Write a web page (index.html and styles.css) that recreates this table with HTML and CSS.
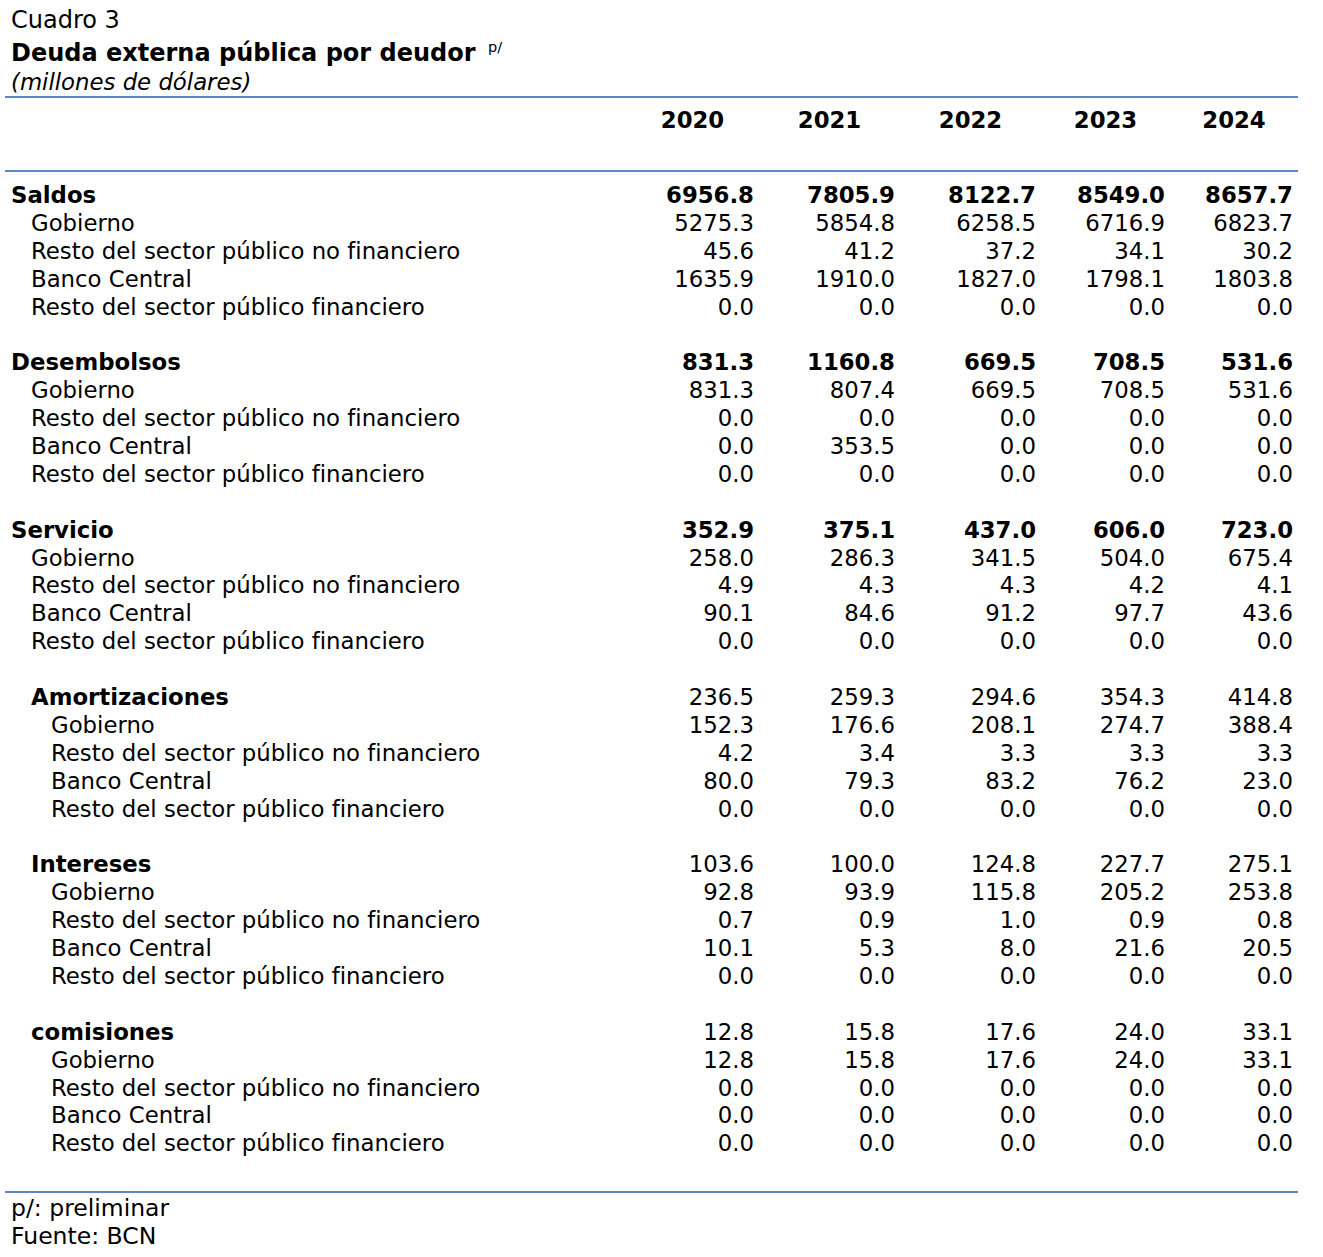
FILE: index.html
```html
<!DOCTYPE html>
<html lang="es">
<head>
<meta charset="utf-8">
<title>Cuadro 3</title>
<link rel="stylesheet" href="styles.css">
</head>
<body>
<div class="sheet">
  <div class="caption">
    <div class="cap-num">Cuadro 3</div>
    <div class="cap-title">Deuda externa pública por deudor <sup class="sup">p/</sup></div>
    <div class="cap-unit">(millones de dólares)</div>
  </div>
  <div class="head">
    <div class="row year-row">
      <div></div>
      <div class="yr">2020</div><div class="yr">2021</div><div class="yr">2022</div><div class="yr">2023</div><div class="yr">2024</div>
    </div>
  </div>
  <div class="body">
    <div class="row strong"><div class="lab">Saldos</div><div class="num">6956.8</div><div class="num">7805.9</div><div class="num">8122.7</div><div class="num">8549.0</div><div class="num">8657.7</div></div>
    <div class="row"><div class="lab l1">Gobierno</div><div class="num">5275.3</div><div class="num">5854.8</div><div class="num">6258.5</div><div class="num">6716.9</div><div class="num">6823.7</div></div>
    <div class="row"><div class="lab l1">Resto del sector público no financiero</div><div class="num">45.6</div><div class="num">41.2</div><div class="num">37.2</div><div class="num">34.1</div><div class="num">30.2</div></div>
    <div class="row"><div class="lab l1">Banco Central</div><div class="num">1635.9</div><div class="num">1910.0</div><div class="num">1827.0</div><div class="num">1798.1</div><div class="num">1803.8</div></div>
    <div class="row"><div class="lab l1">Resto del sector público financiero</div><div class="num">0.0</div><div class="num">0.0</div><div class="num">0.0</div><div class="num">0.0</div><div class="num">0.0</div></div>
    <div class="row blank"></div>
    <div class="row strong"><div class="lab">Desembolsos</div><div class="num">831.3</div><div class="num">1160.8</div><div class="num">669.5</div><div class="num">708.5</div><div class="num">531.6</div></div>
    <div class="row"><div class="lab l1">Gobierno</div><div class="num">831.3</div><div class="num">807.4</div><div class="num">669.5</div><div class="num">708.5</div><div class="num">531.6</div></div>
    <div class="row"><div class="lab l1">Resto del sector público no financiero</div><div class="num">0.0</div><div class="num">0.0</div><div class="num">0.0</div><div class="num">0.0</div><div class="num">0.0</div></div>
    <div class="row"><div class="lab l1">Banco Central</div><div class="num">0.0</div><div class="num">353.5</div><div class="num">0.0</div><div class="num">0.0</div><div class="num">0.0</div></div>
    <div class="row"><div class="lab l1">Resto del sector público financiero</div><div class="num">0.0</div><div class="num">0.0</div><div class="num">0.0</div><div class="num">0.0</div><div class="num">0.0</div></div>
    <div class="row blank"></div>
    <div class="row strong"><div class="lab">Servicio</div><div class="num">352.9</div><div class="num">375.1</div><div class="num">437.0</div><div class="num">606.0</div><div class="num">723.0</div></div>
    <div class="row"><div class="lab l1">Gobierno</div><div class="num">258.0</div><div class="num">286.3</div><div class="num">341.5</div><div class="num">504.0</div><div class="num">675.4</div></div>
    <div class="row"><div class="lab l1">Resto del sector público no financiero</div><div class="num">4.9</div><div class="num">4.3</div><div class="num">4.3</div><div class="num">4.2</div><div class="num">4.1</div></div>
    <div class="row"><div class="lab l1">Banco Central</div><div class="num">90.1</div><div class="num">84.6</div><div class="num">91.2</div><div class="num">97.7</div><div class="num">43.6</div></div>
    <div class="row"><div class="lab l1">Resto del sector público financiero</div><div class="num">0.0</div><div class="num">0.0</div><div class="num">0.0</div><div class="num">0.0</div><div class="num">0.0</div></div>
    <div class="row blank"></div>
    <div class="row"><div class="lab l1 b">Amortizaciones</div><div class="num">236.5</div><div class="num">259.3</div><div class="num">294.6</div><div class="num">354.3</div><div class="num">414.8</div></div>
    <div class="row"><div class="lab l2">Gobierno</div><div class="num">152.3</div><div class="num">176.6</div><div class="num">208.1</div><div class="num">274.7</div><div class="num">388.4</div></div>
    <div class="row"><div class="lab l2">Resto del sector público no financiero</div><div class="num">4.2</div><div class="num">3.4</div><div class="num">3.3</div><div class="num">3.3</div><div class="num">3.3</div></div>
    <div class="row"><div class="lab l2">Banco Central</div><div class="num">80.0</div><div class="num">79.3</div><div class="num">83.2</div><div class="num">76.2</div><div class="num">23.0</div></div>
    <div class="row"><div class="lab l2">Resto del sector público financiero</div><div class="num">0.0</div><div class="num">0.0</div><div class="num">0.0</div><div class="num">0.0</div><div class="num">0.0</div></div>
    <div class="row blank"></div>
    <div class="row"><div class="lab l1 b">Intereses</div><div class="num">103.6</div><div class="num">100.0</div><div class="num">124.8</div><div class="num">227.7</div><div class="num">275.1</div></div>
    <div class="row"><div class="lab l2">Gobierno</div><div class="num">92.8</div><div class="num">93.9</div><div class="num">115.8</div><div class="num">205.2</div><div class="num">253.8</div></div>
    <div class="row"><div class="lab l2">Resto del sector público no financiero</div><div class="num">0.7</div><div class="num">0.9</div><div class="num">1.0</div><div class="num">0.9</div><div class="num">0.8</div></div>
    <div class="row"><div class="lab l2">Banco Central</div><div class="num">10.1</div><div class="num">5.3</div><div class="num">8.0</div><div class="num">21.6</div><div class="num">20.5</div></div>
    <div class="row"><div class="lab l2">Resto del sector público financiero</div><div class="num">0.0</div><div class="num">0.0</div><div class="num">0.0</div><div class="num">0.0</div><div class="num">0.0</div></div>
    <div class="row blank"></div>
    <div class="row"><div class="lab l1 b">comisiones</div><div class="num">12.8</div><div class="num">15.8</div><div class="num">17.6</div><div class="num">24.0</div><div class="num">33.1</div></div>
    <div class="row"><div class="lab l2">Gobierno</div><div class="num">12.8</div><div class="num">15.8</div><div class="num">17.6</div><div class="num">24.0</div><div class="num">33.1</div></div>
    <div class="row"><div class="lab l2">Resto del sector público no financiero</div><div class="num">0.0</div><div class="num">0.0</div><div class="num">0.0</div><div class="num">0.0</div><div class="num">0.0</div></div>
    <div class="row"><div class="lab l2">Banco Central</div><div class="num">0.0</div><div class="num">0.0</div><div class="num">0.0</div><div class="num">0.0</div><div class="num">0.0</div></div>
    <div class="row"><div class="lab l2">Resto del sector público financiero</div><div class="num">0.0</div><div class="num">0.0</div><div class="num">0.0</div><div class="num">0.0</div><div class="num">0.0</div></div>
  </div>
  <div class="foot">
    <div class="note">p/: preliminar</div>
    <div class="note">Fuente: BCN</div>
  </div>
</div>
</body>
</html>
```
FILE: styles.css
```css
html, body {
  margin: 0;
  padding: 0;
  background: #ffffff;
}
body {
  font-family: "DejaVu Sans", Verdana, sans-serif;
  font-size: 22.8px;
  color: #000000;
}
.sheet {
  margin-left: 5px;
  width: 1293px;
}
.caption {
  padding: 6px 0 0 6px;
}
.cap-num {
  font-size: 24px;
  line-height: 28px;
  height: 28px;
}
.cap-title {
  margin-top: 4px;
  font-size: 24px;
  font-weight: bold;
  line-height: 30px;
  height: 30px;
}
.sup {
  font-size: 14.5px;
  font-weight: normal;
  vertical-align: 9px;
  line-height: 0;
  margin-left: 4px;
}
.cap-unit {
  font-style: italic;
  line-height: 28px;
  height: 28px;
}
.head {
  border-top: 2px solid #5b87c6;
  border-bottom: 2px solid #5b87c6;
  padding-top: 8px;
  height: 64px;
}
.row {
  display: grid;
  grid-template-columns: 621px 133px 141px 141px 129px 128px;
  height: 27.9px;
  line-height: 28px;
  align-items: center;
  white-space: nowrap;
}
.year-row .yr {
  text-align: center;
  font-weight: bold;
}
.body {
  padding-top: 9px;
  padding-bottom: 34px;
}
.lab {
  padding-left: 6px;
}
.lab.l1 {
  padding-left: 26px;
}
.lab.l2 {
  padding-left: 46px;
}
.b,
.strong {
  font-weight: bold;
}
.num {
  text-align: right;
  padding-right: 5px;
}
.foot {
  border-top: 2px solid #5b87c6;
  padding: 1px 0 0 6px;
  font-size: 23.5px;
}
.note {
  line-height: 28px;
  height: 28px;
}
```
